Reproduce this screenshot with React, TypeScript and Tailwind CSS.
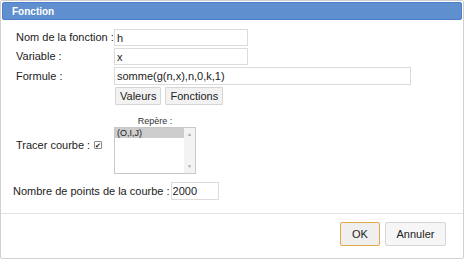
export default function App() {
  return (
    <div className="w-[464px] h-[259px] bg-white font-['Liberation_Sans',Arial,sans-serif] text-[11px] text-[#222]">
      <div className="h-full border border-[#d0d0d0] rounded-[2px] flex flex-col">
        {/* title */}
        <div className="mx-[1px] mt-[1px] h-[18px] bg-[#5f8fcf] border border-[#4a7fcb] rounded-[2px] flex items-center pl-[9px]">
          <span className="text-white font-bold text-[10px]">Fonction</span>
        </div>

        <div className="flex-1 pt-[9px]">
          <div className="flex flex-col gap-[2px] pl-[15px]">
            <div className="flex items-center">
              <label className="w-[98px] shrink-0 whitespace-nowrap">Nom de la fonction :</label>
              <input readOnly value="h" className="w-[134px] h-[17px] border border-[#dcdcdc] px-[2px] outline-none" />
            </div>
            <div className="flex items-center">
              <label className="w-[98px] shrink-0 whitespace-nowrap">Variable :</label>
              <input readOnly value="x" className="w-[134px] h-[17px] border border-[#dcdcdc] px-[2px] outline-none" />
            </div>
            <div className="flex items-center">
              <label className="w-[98px] shrink-0 whitespace-nowrap">Formule :</label>
              <input readOnly value="somme(g(n,x),n,0,k,1)" className="w-[297px] h-[18px] border border-[#dcdcdc] px-[2px] outline-none" />
            </div>
            <div className="flex gap-[4px] pl-[99px]">
              <button className="h-[18px] px-[4px] bg-[#f2f2f2] border border-[#d6d6d6] rounded-[1px]">Valeurs</button>
              <button className="h-[18px] px-[4px] bg-[#f2f2f2] border border-[#d6d6d6] rounded-[1px]">Fonctions</button>
            </div>
          </div>

          <div className="flex items-center pl-[15px] mt-[11px]">
            <div className="w-[98px] shrink-0 flex items-center whitespace-nowrap">
              <span>Tracer courbe :</span>
              <span className="ml-[4px] w-[8px] h-[8px] border border-[#888] rounded-[1px] flex items-center justify-center text-[7px] leading-none">✔</span>
            </div>
            <div className="flex flex-col items-center">
              <span className="text-[9px] leading-[11px] text-[#333]">Repère :</span>
              <div className="w-[82px] h-[47px] border border-[#c8c8c8] flex">
                <div className="flex-1">
                  <div className="bg-[#cdcdcd] h-[10px] text-[9px] leading-[10px] pl-[2px]">(O,I,J)</div>
                </div>
                <div className="w-[11px] bg-[#f3f3f3] flex flex-col justify-between items-center text-[5px] text-[#aaa] py-[3px]">
                  <span>▲</span>
                  <span>▼</span>
                </div>
              </div>
            </div>
          </div>

          <div className="flex items-center pl-[12px] mt-[8px]">
            <span className="whitespace-nowrap">Nombre de points de la courbe :</span>
            <input readOnly value="2000" className="ml-[1px] w-[48px] h-[18px] border border-[#dcdcdc] px-[1px] outline-none" />
          </div>
        </div>

        <div className="border-t border-[#e2e2e2] h-[45px] flex items-start pt-[8px] justify-end gap-[5px] pr-[17px]">
          <button className="w-[40px] h-[24px] bg-[#efefef] border border-[#e0a94a] rounded-[2px]">OK</button>
          <button className="w-[61px] h-[24px] bg-[#f6f6f6] border border-[#d6d6d6] rounded-[2px]">Annuler</button>
        </div>
      </div>
    </div>
  );
}
